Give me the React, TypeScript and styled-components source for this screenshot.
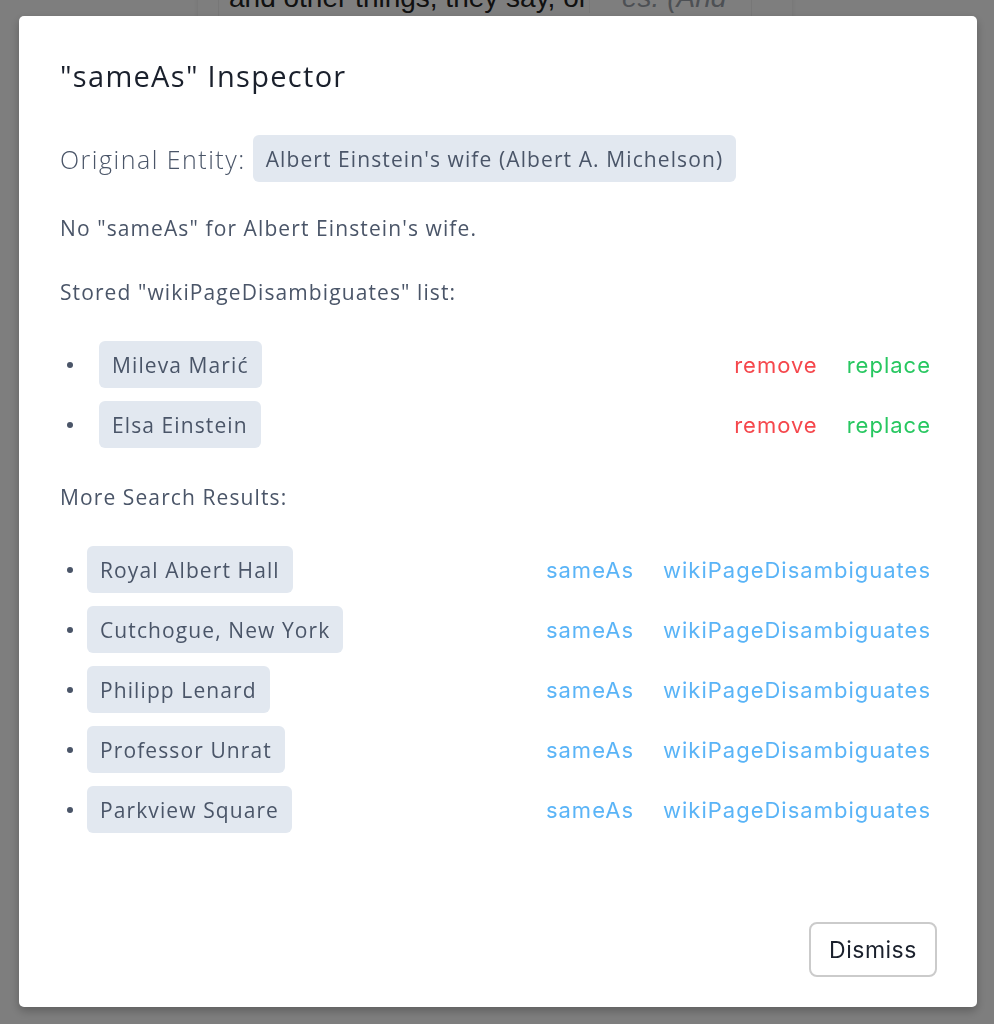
import styled, { createGlobalStyle } from "styled-components";

const GlobalStyle = createGlobalStyle`
  html, body {
    margin: 0;
    padding: 0;
    background: #ffffff;
  }

  body {
    font-family: "Open Sans", "Lato", sans-serif;
  }
`;

//background page behind the overlay
const Page = styled.div`
  height: 1024px;
  display: flex;
  justify-content: center;
  overflow: hidden;
  background: #fdfdfd;
`;

const BackCard = styled.div`
  width: 596px;
  margin-left: -4px;
  margin-top: -18px;
  height: 300px;
  border: 1px solid #f2f2f2;
  padding: 0 40px 0 20px;
  box-sizing: border-box;
  box-shadow: 0 2px 6px rgba(0, 0, 0, 0.06);
`;

const BackColumn = styled.div`
  height: 100%;
  border-left: 1px solid #eee;
  border-right: 1px solid #eee;
  font-family: "Liberation Sans", sans-serif;
  font-size: 28px;
  line-height: 30px;
`;

const BackLine = styled.div`
  display: flex;
  white-space: nowrap;
`;

const BackDark = styled.span`
  width: 360px;
  padding-left: 10px;
  overflow: hidden;
  color: #222;
`;

const BackNote = styled.span`
  flex: 1;
  padding-left: 32px;
  border-left: 1px solid #eee;
  color: #9aa0a8;
  font-style: italic;
`;

const Overlay = styled.div`
  position: fixed;
  inset: 0;
  background: rgba(0, 0, 0, 0.5);
  display: flex;
  justify-content: center;
  align-items: flex-start;
  padding-top: 16px;
`;

const Modal = styled.section`
  width: 958px;
  height: 991px;
  margin-left: 2px;
  box-sizing: border-box;
  background: #fff;
  border-radius: 5px;
  box-shadow: 0 4px 10px rgba(0, 0, 0, 0.25);
  padding: 37px 46px 30px 41px;
  display: flex;
  flex-direction: column;
  color: #4a5568;
`;

const Title = styled.h2`
  margin: 0;
  font-size: 29px;
  letter-spacing: 1.3px;
  line-height: 46px;
  font-weight: 500;
  color: #1a202c;
`;

const EntityRow = styled.div`
  display: flex;
  align-items: center;
  gap: 7px;
  margin-top: 36px;
  font-size: 25px;
  letter-spacing: 1.5px;
  font-weight: 300;
`;

const Pill = styled.span<{ $indent?: number }>`
  display: inline-flex;
  align-items: center;
  height: 47px;
  padding: 0 13px;
  margin-left: ${(p) => p.$indent ?? 0}px;
  background: #e2e8f0;
  border-radius: 6px;
  font-size: 21px;
  letter-spacing: 1.1px;
  font-weight: 400;
  color: #4a5568;
  white-space: nowrap;
`;

const Text = styled.p`
  margin: 31px 0 0;
  font-size: 21px;
  letter-spacing: 1.1px;
  line-height: 30px;

  & + & {
    margin-top: 34px;
  }
`;

const List = styled.ul`
  list-style: none;
  margin: 34px 0 0;
  padding: 0;
  display: flex;
  flex-direction: column;
  gap: 13px;

  & + ${Text} {
    margin-top: 34px;
  }
`;

const Row = styled.li`
  display: flex;
  align-items: center;
`;

const Dot = styled.span`
  width: 6px;
  height: 6px;
  border-radius: 50%;
  background: #4a5568;
  margin-left: 7px;
  flex-shrink: 0;
`;

const Actions = styled.div`
  margin-left: auto;
  display: flex;
  gap: 29px;
`;

const Action = styled.a<{ $color: string }>`
  font-family: "Inter", "Liberation Sans", sans-serif;
  font-size: 22px;
  letter-spacing: 1px;
  color: ${(p) => p.$color};
  cursor: pointer;
  text-decoration: none;
`;

const Footer = styled.div`
  margin-top: auto;
  display: flex;
  justify-content: flex-end;
  margin-right: -6px;
`;

const Dismiss = styled.button`
  width: 128px;
  height: 55px;
  border: 2px solid #cbcbcb;
  border-radius: 8px;
  background: #fff;
  font-family: "Inter", "Liberation Sans", sans-serif;
  font-size: 23px;
  letter-spacing: 0.5px;
  color: #1a202c;
  cursor: pointer;
`;

const stored = ["Mileva Marić", "Elsa Einstein"];
const results = [
  "Royal Albert Hall",
  "Cutchogue, New York",
  "Philipp Lenard",
  "Professor Unrat",
  "Parkview Square",
];

const App = () => {
  return (
    <>
      <GlobalStyle />
      <Page>
        <BackCard>
          <BackColumn>
            <BackLine>
              <BackDark>and other things, they say, only</BackDark>
              <BackNote>es. (And</BackNote>
            </BackLine>
            <BackLine>
              <BackDark>and this</BackDark>
            </BackLine>
          </BackColumn>
        </BackCard>
      </Page>
      <Overlay>
        <Modal>
          <Title>"sameAs" Inspector</Title>
          <EntityRow>
            Original Entity:
            <Pill>Albert Einstein's wife (Albert A. Michelson)</Pill>
          </EntityRow>
          <Text>No "sameAs" for Albert Einstein's wife.</Text>
          <Text>Stored "wikiPageDisambiguates" list:</Text>
          <List>
            {stored.map((name) => (
              <Row key={name}>
                <Dot />
                <Pill $indent={26}>{name}</Pill>
                <Actions>
                  <Action $color="#f5474c">remove</Action>
                  <Action $color="#27c760">replace</Action>
                </Actions>
              </Row>
            ))}
          </List>
          <Text>More Search Results:</Text>
          <List>
            {results.map((name) => (
              <Row key={name}>
                <Dot />
                <Pill $indent={14}>{name}</Pill>
                <Actions>
                  <Action $color="#5ab4f7">sameAs</Action>
                  <Action $color="#5ab4f7">wikiPageDisambiguates</Action>
                </Actions>
              </Row>
            ))}
          </List>
          <Footer>
            <Dismiss>Dismiss</Dismiss>
          </Footer>
        </Modal>
      </Overlay>
    </>
  );
};

export default App;
